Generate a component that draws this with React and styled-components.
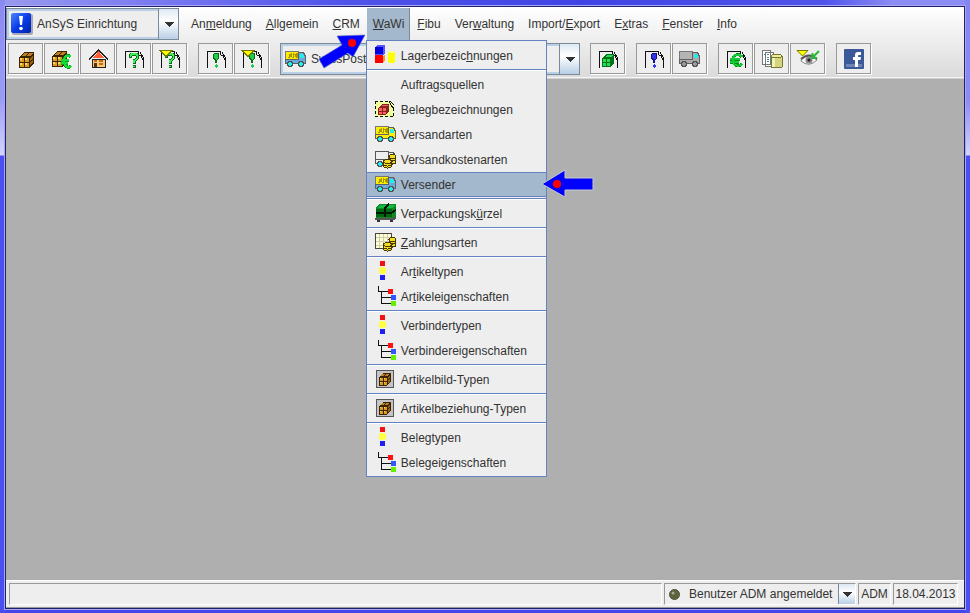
import { useState } from "react";
import styled, { createGlobalStyle } from "styled-components";

const menuItems = [
  { label: "Anmeldung", key: 2 },
  { label: "Allgemein", key: 0 },
  { label: "CRM", key: 0 },
  { label: "WaWi", key: 0, tight: true },
  { label: "Fibu", key: 0 },
  { label: "Verwaltung", key: 3 },
  { label: "Import/Export", key: 7 },
  { label: "Extras", key: 1 },
  { label: "Fenster", key: 0 },
  { label: "Info", key: 0 },
];

const wawiGroups = [
  [{ label: "Lagerbezeichnungen", key: 11, icon: <StorageIcon /> }],
  [
    { label: "Auftragsquellen" },
    { label: "Belegbezeichnungen", icon: <DocBoxIcon /> },
    { label: "Versandarten", icon: <TruckIcon body="#ffee00" /> },
    { label: "Versandkostenarten", icon: <TruckCoinsIcon /> },
    { label: "Versender", icon: <TruckIcon /> },
  ],
  [{ label: "Verpackungskürzel", key: 12, icon: <PackageIcon /> }],
  [{ label: "Zahlungsarten", key: 0, icon: <PaymentIcon /> }],
  [
    { label: "Artikeltypen", key: 2, icon: <TypesIcon /> },
    { label: "Artikeleigenschaften", key: 2, icon: <TreeIcon /> },
  ],
  [
    { label: "Verbindertypen", icon: <TypesIcon /> },
    { label: "Verbindereigenschaften", icon: <TreeIcon /> },
  ],
  [{ label: "Artikelbild-Typen", icon: <FramedCrateIcon /> }],
  [{ label: "Artikelbeziehung-Typen", icon: <FramedCrateIcon /> }],
  [
    { label: "Belegtypen", icon: <TypesIcon /> },
    { label: "Belegeigenschaften", icon: <TreeIcon /> },
  ],
];

const toolsLeft = [
  [
    { name: "Artikel", icon: <CrateIcon /> },
    { name: "Preise", icon: <CrateEuroIcon /> },
    { name: "Adressen", icon: <HouseIcon /> },
    { name: "Anfrage", icon: <DocIcon mark="?" /> },
    { name: "Anfragen filtern", icon: <DocIcon mark="?" filter /> },
  ],
  [
    { name: "Auftrag", icon: <DocIcon mark="!" /> },
    { name: "Aufträge filtern", icon: <DocIcon mark="!" filter /> },
  ],
];

const toolsRight = [
  [{ name: "Lieferschein", icon: <DocIcon mark="box" /> }],
  [
    { name: "Bestellung", icon: <DocIcon mark="!" color="#3333ee" edge="#111188" /> },
    { name: "Versand", icon: <TruckIcon body="#aaaaaa" label="#b4b4b4" wheel="#999999" plain /> },
  ],
  [
    { name: "Rechnung", icon: <DocIcon mark="euro" /> },
    { name: "Archiv", icon: <ArchiveIcon /> },
    { name: "Vorschau", icon: <EyeIcon /> },
  ],
  [{ name: "Facebook", icon: <FacebookIcon /> }],
];

function Mnemonic({ label, index }) {
  if (index === undefined) return label;
  return (
    <span>
      {label.slice(0, index)}
      <u>{label[index]}</u>
      {label.slice(index + 1)}
    </span>
  );
}

function Svg({ w = 20, h = 20, children, ...rest }) {
  return (
    <svg width={w} height={h} viewBox={`0 0 ${w} ${h}`} shapeRendering="crispEdges" aria-hidden="true" {...rest}>
      {children}
    </svg>
  );
}

function Crate() {
  return (
    <g>
      <path d="M0 5L5 0H15V11L10 16H0Z" fill="#3a2400" />
      <path d="M2 4L5 1H9L6 4ZM7 4L10 1H14L11 4Z" fill="#c08020" />
      <path d="M11 6L14 3V6L11 9ZM11 10L14 7V10L11 14Z" fill="#996010" />
      <path d="M1 6h4v4H1zM6 6h4v4H6zM1 11h4v4H1zM6 11h4v4H6z" fill="#dd9a20" />
      <path d="M1 6h2v2H1zM6 6h2v2H6zM1 11h2v2H1zM6 11h2v2H6z" fill="#ffd868" />
    </g>
  );
}

function CrateIcon() {
  return <Svg><g transform="translate(3 3)"><Crate /></g></Svg>;
}

function CrateEuroIcon() {
  return (
    <Svg w={22}>
      <g transform="translate(1 2)"><Crate /></g>
      <path d="M20 8C17 5 13 7 13 12S17 20 20 17M10 11H18M10 14H17" stroke="#0a9a20" strokeWidth="3" fill="none" />
      <path d="M20 8C17 5 13 7 13 12S17 20 20 17M10 11H18M10 14H17" stroke="#11dd33" strokeWidth="2" fill="none" />
    </Svg>
  );
}

function FramedCrateIcon() {
  return (
    <Svg>
      <rect x="1" y="1" width="18" height="18" fill="#c4c4c4" />
      <rect x="1.5" y="1.5" width="17" height="17" fill="none" stroke="#555" />
      <g transform="translate(4 4) scale(.8)"><Crate /></g>
    </Svg>
  );
}

function HouseIcon() {
  return (
    <Svg>
      <path d="M4 10H17V18H4Z" fill="#ffc878" stroke="#222" />
      <path d="M5 9L10.500 2L16 9Z" fill="#ff6038" />
      <path d="M1 10.500L10.500 1L20 10.500" fill="none" stroke="#222" />
      <path d="M6 11h3v2H6zM11 11h4v2h-4zM11 14h4v2h-4z" fill="#b87018" />
      <path d="M6 14h3v4H6z" fill="#553311" />
    </Svg>
  );
}

function DocIcon({ mark, color = "#22cc44", edge = "#0a6a1c", filter }) {
  return (
    <Svg w={22}>
      <path d="M2.500 19V2.500H15M15.500 2V5.500L18 7L20.500 12M17 3L20.500 9V19" fill="none" stroke="#111" />
      {mark === "?" && (
        <g fill="none">
          <path d="M7.500 9V6.500L9 5H13L14.500 6.500V9L11 12V15M11 16V19" stroke={edge} strokeWidth="3" />
          <path d="M7.500 8V6.500L9 5H13L14.500 6.500V9L11 12V14M11 17V18" stroke="#44ee55" strokeWidth="1.500" />
        </g>
      )}
      {mark === "!" && (
        <g>
          <path d="M9 4H13L14 5V10L12 11V14H10V11L8 10V5Z" fill={edge} />
          <path d="M11 15L13 17L11 19L9 17Z" fill={color} />
          <path d="M9 5H13V9L11 11L9 9Z" fill={color} />
        </g>
      )}
      {mark === "box" && (
        <g>
          <path d="M5 9L9 5H17V14L13 18H5Z" fill="#087018" />
          <path d="M6 10h3v3H6zM10 10h3v3h-3zM6 14h3v3H6zM10 14h3v3h-3zM8 8l2-2h6l-2 2z" fill="#22dd55" />
        </g>
      )}
      {mark === "euro" && (
        <g fill="none">
          <path d="M17 8C14 4 8 5 8 11S14 18 17 15M5 10H15M5 13H14" stroke="#0a8a1c" strokeWidth="3" />
          <path d="M17 8C14 4 8 5 8 11S14 18 17 15M5 10H15M5 13H14" stroke="#11cc33" strokeWidth="2" />
        </g>
      )}
      {filter && <path d="M1 1.500H13L7 7.500Z" fill="#ffff00" stroke="#777700" />}
    </Svg>
  );
}

function Wheel({ x, y, fill }) {
  return (
    <g>
      <path d={`M${x - 2} ${y - 3}h4v1h1v4h-1v1h-4v-1h-1v-4h1z`} fill="#505050" />
      <path d={`M${x - 1} ${y - 2}h2v1h1v2h-1v1h-2v-1h-1v-2h1z`} fill={fill} />
    </g>
  );
}

function TruckIcon({ body = "#6aaae0", label = "#ffee00", wheel = "#22eeee", plain }) {
  return (
    <Svg w={22}>
      <path d="M.5 2.500H13.500V10.500H.5Z" fill={label} stroke="#777" />
      <path d="M13.500 3.500H18.500L20.500 7.500V14.500H.5V10.500H13.500Z" fill={body} stroke="#606060" />
      <path d="M15 5h3v1h1v3h-4z" fill="#22eeee" />
      {!plain && <path d="M3 8h1V5h1v2h1V4M7 8h1V4M9 5h1v2h1V4M11 8h1V4" fill="none" stroke="#a89800" />}
      <Wheel x={5} y={15} fill={wheel} />
      <Wheel x={16} y={15} fill={wheel} />
    </Svg>
  );
}

function Coins() {
  return (
    <g fill="#f4dc20" stroke="#443800" strokeWidth="1">
      <ellipse cx="17.500" cy="13" rx="3.500" ry="2" />
      <ellipse cx="17.500" cy="10" rx="3.500" ry="2" />
      <ellipse cx="17.500" cy="7.500" rx="3.500" ry="2" />
      <ellipse cx="12.500" cy="17" rx="4" ry="2" />
      <ellipse cx="12.500" cy="15" rx="4" ry="2" />
      <ellipse cx="12.500" cy="12.500" rx="4" ry="2" />
    </g>
  );
}

function TruckCoinsIcon() {
  return (
    <Svg w={22}>
      <path d="M.5 2.500H13.500V10.500H.5ZM13.500 3.500H18.500L20.500 7.500V14.500H.5V10" fill="#eeeeee" stroke="#555" />
      <path d="M15 5h3v4h-3z" fill="#22eeee" />
      <Wheel x={5} y={15} fill="#22eeee" />
      <Coins />
    </Svg>
  );
}

function PaymentIcon() {
  return (
    <Svg w={22}>
      <path d="M.5 1.500H16.500V16.500H.5Z" fill="#ffffcc" stroke="#444" />
      <path d="M1 5.500H16M1 9.500H16M1 13.500H16M4.500 2V16M8.500 2V16M12.500 2V16" stroke="#ccccbb" fill="none" />
      <path d="M0 1.500H17" stroke="#444" />
      <Coins />
    </Svg>
  );
}

function PackageIcon() {
  return (
    <Svg w={22}>
      <path d="M1 5L4 1H21V12L18 15H1Z" fill="#118822" />
      <path d="M1 6H17V14H1Z" fill="#006611" />
      <path d="M3 5L5 2H20L17 5H3Z" fill="#11bb44" />
      <path d="M9.500 14V5L14 1M1 9.500H17L21 7" fill="none" stroke="#001800" strokeWidth="2" />
      <path d="M0 15H18L21 12V15L19 17H0Z" fill="#555" />
      <path d="M2 17h3v2H2zM15 17h3v2h-3z" fill="#333" />
    </Svg>
  );
}

function StorageIcon() {
  return (
    <Svg w={22}>
      <path d="M0 2L2 0H10V8L8 10H0Z" fill="#5555ff" />
      <path d="M0 2H8V9H0Z" fill="#0000dd" />
      <path d="M8 11L10 9V15L8 17Z" fill="#ff9911" />
      <path d="M0 10H8V18H0Z" fill="#ff0000" />
      <path d="M13 7Q17 4 20 7V17Q17 19 13 17Z" fill="#ffff00" />
      <ellipse cx="16.500" cy="7" rx="3" ry="1.500" fill="#ffff88" />
    </Svg>
  );
}

function DocBoxIcon() {
  return (
    <Svg w={22}>
      <path d="M0 2H14L19 7V18H0Z" fill="#eeff99" />
      <path d="M.5 2V18M0 2.500H14M0 17.500H19M18.500 17V9" stroke="#111" strokeDasharray="3 2" fill="none" />
      <path d="M14 2L16 6L19 10M15 2L19 6" stroke="#111" fill="none" />
      <path d="M3 9L7 5H14V12L11 16H3Z" fill="#882222" />
      <path d="M4 9h3v3H4zM8 9h3v3H8zM4 13h3v2H4zM8 13h3v2H8zM6 7l1-1h6l-1 1z" fill="#ff6060" />
    </Svg>
  );
}

function TypesIcon() {
  return (
    <Svg>
      <rect x="5" y="0" width="5" height="5" fill="#ee1111" />
      <path d="M5 6H10L11 8V11L10 13H5L4 11V8Z" fill="#ffff44" />
      <rect x="5" y="14" width="5" height="5" fill="#2222ee" />
    </Svg>
  );
}

function TreeIcon() {
  return (
    <Svg w={22}>
      <path d="M3.500 0V5.500H13M6.500 5V17.500H16M6 11.500H16" stroke="#111" fill="none" />
      <rect x="13" y="3" width="5" height="5" fill="#ff1111" />
      <rect x="16" y="9" width="5" height="5" fill="#3355ff" />
      <rect x="16" y="15" width="5" height="5" fill="#66ee00" />
    </Svg>
  );
}

function ArchiveIcon() {
  return (
    <Svg w={22}>
      <path d="M1.500 1.500H9.500V15.500H1.500ZM4.500 3.500H12.500V17.500H4.500Z" fill="#fff" stroke="#777" />
      <path d="M3 5.500H8M6 8.500H11M6 10.500H11M6 12.500H11" stroke="#448899" strokeDasharray="2 1" />
      <path d="M10 7Q15 4 21 7V18Q15 20 10 18Z" fill="#d4d47c" stroke="#777733" />
      <path d="M11 8H14V18H11Z" fill="#f2f2b4" />
      <ellipse cx="15.500" cy="7" rx="5.500" ry="1.500" fill="#eeee99" stroke="#777733" />
    </Svg>
  );
}

function EyeIcon() {
  return (
    <Svg w={24} shapeRendering="auto">
      <path d="M5 11Q13 3 21 11Q13 19 5 12Z" fill="#f4f4f4" stroke="#888" />
      <path d="M5 10Q13 3 21 10" fill="none" stroke="#555" strokeWidth="2" />
      <circle cx="13" cy="11" r="3.500" fill="#888" />
      <circle cx="13" cy="11" r="1.500" fill="#222" />
      <path d="M1 1.500H12L6.500 7Z" fill="#ffff00" stroke="#777700" />
      <path d="M23 2L17 8M16.500 4V9H21" fill="none" stroke="#22bb33" strokeWidth="2" />
    </Svg>
  );
}

function FacebookIcon() {
  return (
    <Svg shapeRendering="auto">
      <rect width="20" height="20" rx="1" fill="#3b5998" />
      <rect x="2" y="15" width="16" height="3" fill="#6d84b4" />
      <path d="M11 18V11H9V8H11V6Q11 3 14 3H17V6H15Q14 6 14 7V8H17L16.500 11H14V18Z" fill="#fff" />
    </Svg>
  );
}

function AppIcon() {
  return (
    <Svg w={22} h={22} shapeRendering="auto">
      <defs>
        <linearGradient id="appBlue" x1="0" y1="0" x2="1" y2="1">
          <stop offset="0" stopColor="#4a86ff" />
          <stop offset=".5" stopColor="#0a3ce8" />
          <stop offset="1" stopColor="#0022aa" />
        </linearGradient>
      </defs>
      <rect x="1" y="1" width="21" height="21" rx="2" fill="#a8a8b4" />
      <rect width="20" height="20" rx="2" fill="url(#appBlue)" />
      <path d="M8 3H12L11 12H9Z" fill="#fff" />
      <circle cx="10" cy="15.500" r="1.800" fill="#fff" />
    </Svg>
  );
}

function Combo({ label, icon, value, size }) {
  return (
    <ComboBox $size={size}>
      <ComboIcon>{icon}</ComboIcon>
      <ComboSelect aria-label={label} defaultValue={value}>
        <option>{value}</option>
      </ComboSelect>
      <ComboArrow>
        <Svg w={10} h={5}><path d="M0 0H10L5 5Z" fill="#333" /></Svg>
      </ComboArrow>
    </ComboBox>
  );
}

function ToolGroups({ groups }) {
  return groups.map((group) => (
    <ToolGroup key={group[0].name}>
      {group.map((tool) => (
        <ToolButton key={tool.name} aria-label={tool.name}>{tool.icon}</ToolButton>
      ))}
    </ToolGroup>
  ));
}

function App() {
  const [openMenu, setOpenMenu] = useState("WaWi");
  const [selected, setSelected] = useState("Versender");

  return (
    <Frame>
      <GlobalStyle />
      <Window>
        <Header>
          <MenuRow>
            <Combo size="module" label="Modul" icon={<AppIcon />} value="AnSyS Einrichtung" />
            <MenuBar>
              {menuItems.map((item) => (
                <MenuSlot key={item.label}>
                  <MenuButton
                    $active={openMenu === item.label}
                    $tight={item.tight}
                    onClick={() => setOpenMenu(openMenu === item.label ? "" : item.label)}
                  >
                    <Mnemonic label={item.label} index={item.key} />
                  </MenuButton>
                  {item.label === "WaWi" && openMenu === "WaWi" && (
                    <>
                      <Dropdown>
                        {wawiGroups.map((group) => (
                          <DropdownGroup key={group[0].label}>
                            {group.map((entry) => (
                              <Entry
                                key={entry.label}
                                role="menuitem"
                                $active={selected === entry.label}
                                onClick={() => setSelected(entry.label)}
                              >
                                <EntryIcon>{entry.icon}</EntryIcon>
                                <Mnemonic label={entry.label} index={entry.key} />
                              </Entry>
                            ))}
                          </DropdownGroup>
                        ))}
                      </Dropdown>
                      <MenuPointer width="52" height="38" viewBox="0 0 52 38" aria-hidden="true">
                        <path d="M50 4L22 5L27 14L4 28L9 37L33 22L38 26Z" fill="#0000ff" stroke="#6677bb" strokeWidth=".6" />
                        <circle cx="37" cy="12" r="4" fill="#ff0000" />
                      </MenuPointer>
                      <EntryPointer width="54" height="30" viewBox="0 0 54 30" aria-hidden="true">
                        <path d="M1 15L24 1V9H52V21H24V28Z" fill="#0000ff" stroke="#c8c8d0" />
                        <circle cx="16" cy="15" r="4" fill="#ff0000" />
                      </EntryPointer>
                    </>
                  )}
                </MenuSlot>
              ))}
            </MenuBar>
          </MenuRow>
          <Toolbar>
            <ToolGroups groups={toolsLeft} />
            <Combo size="carrier" label="Versender" icon={<TruckIcon />} value="SwissPost" />
            <ToolGroups groups={toolsRight} />
          </Toolbar>
        </Header>
        <Desktop />
        <StatusBar>
          <StatusCell />
          <StatusCell>
            <Combo
              size="status"
              label="Benutzer"
              icon={
                <Svg w={11} h={11} shapeRendering="auto">
                  <circle cx="5.500" cy="5.500" r="5" fill="#5c6440" stroke="#4c5438" />
                  <circle cx="4" cy="4" r="1.500" fill="#a8ac90" />
                </Svg>
              }
              value="Benutzer ADM angemeldet"
            />
          </StatusCell>
          <StatusCell>ADM</StatusCell>
          <StatusCell>18.04.2013</StatusCell>
        </StatusBar>
      </Window>
    </Frame>
  );
}

const GlobalStyle = createGlobalStyle`
  * {
    box-sizing: border-box;
  }
  body {
    margin: 0;
  }
  body, button, select {
    font-family: "Liberation Sans", Arial, sans-serif;
    font-size: 12px;
    color: #333;
  }
  button {
    cursor: pointer;
  }
  svg {
    display: block;
    flex: none;
  }
`;

const Frame = styled.div`
  display: flex;
  min-height: 100vh;
  padding: 5px 4px 3px;
  background:
    linear-gradient(#8a8af0, #9c9cf6 100px, #d4d4fc 155px, #4c4ff0 156px) left / 5px 100% no-repeat,
    linear-gradient(#8484f2, #8c8cf4 100px, #d4d4fc 155px, #4c4ff0 156px) right / 5px 100% no-repeat,
    linear-gradient(90deg, #9a9aee, #7c7cf0 15%, #5054ea 35%, #4044e4 60%, #5054ea 85%, #8c8cf4 92%) top / 100% 6px no-repeat,
    #4448ea;
`;

const Window = styled.div`
  flex: 1;
  min-width: 0;
  display: flex;
  flex-direction: column;
  border: 1px solid #20206c;
  outline: 1px solid #a8a8f4;
  margin: 1px;
`;

const Header = styled.header`
  padding-top: 1px;
  background: linear-gradient(#ffffff, #dadada);
  border-bottom: 1px solid #d0d0d0;
  box-shadow: inset 0 -1px #f6f6f6;
`;

const MenuRow = styled.div`
  display: flex;
  height: 32px;
`;

const MenuBar = styled.nav`
  display: flex;
  padding-left: 5px;
`;

const MenuSlot = styled.div`
  position: relative;
  display: flex;
`;

const MenuButton = styled.button`
  padding: 0 ${({ $tight }) => ($tight ? 6 : 7)}px;
  border: 0;
  background: ${({ $active }) => ($active ? "#a3b8cc" : "none")};
  box-shadow: ${({ $active }) => ($active ? "inset -1px 0 #7a8a99" : "none")};
`;

const Dropdown = styled.div.attrs({ role: "menu" })`
  position: absolute;
  z-index: 2;
  top: 100%;
  left: -1px;
  width: 181px;
  padding: 2px 0 1px;
  background: #eee;
  border: 1px solid #6382bf;
`;

const DropdownGroup = styled.div`
  & + & {
    margin-top: 1px;
    padding-top: 2px;
    border-top: 1px solid #6382bf;
    box-shadow: inset 0 1px #fff;
  }
`;

const Entry = styled.button`
  display: flex;
  align-items: center;
  gap: 4px;
  width: 100%;
  height: 25px;
  padding: 0 8px;
  border: solid ${({ $active }) => ($active ? "#6382bf" : "transparent")};
  border-width: 1px 0;
  background: ${({ $active }) => ($active ? "#a3b8cc" : "none")};
  white-space: nowrap;
`;

const EntryIcon = styled.span`
  width: 22px;
  height: 21px;
`;

const MenuPointer = styled.svg`
  position: absolute;
  z-index: 3;
  top: 23px;
  right: 100%;
`;

const EntryPointer = styled.svg`
  position: absolute;
  z-index: 3;
  top: 161px;
  left: 174px;
`;

const Toolbar = styled.div`
  display: flex;
  gap: 10px;
  padding: 3px 2px;
`;

const ToolGroup = styled.div`
  display: flex;
  gap: 1px;
  padding-right: 1px;
`;

const ToolButton = styled.button`
  display: flex;
  align-items: center;
  justify-content: center;
  width: 35px;
  height: 31px;
  padding: 0;
  background: #eee;
  border: 1px solid #999;
  box-shadow: 1px 1px #fff;
`;

const comboSizes = {
  module: { width: 173, height: 32, icon: 30, arrow: 20 },
  carrier: { width: 300, height: 32, icon: 30, arrow: 20 },
  status: { width: 190, height: 20, icon: 24, arrow: 17 },
};

const ComboBox = styled.div`
  display: grid;
  grid-template-columns: ${({ $size }) => `${comboSizes[$size].icon}px 1fr ${comboSizes[$size].arrow}px`};
  width: ${({ $size }) => comboSizes[$size].width}px;
  height: ${({ $size }) => comboSizes[$size].height}px;
  background: #eee;
  ${({ $size }) =>
    $size !== "status" &&
    `
    border: 1px solid #7a8a99;
    box-shadow: inset 0 0 0 2px #b8cfe5;
  `}
`;

const ComboIcon = styled.span`
  grid-area: 1 / 1;
  display: flex;
  align-items: center;
  padding-left: 4px;
`;

const ComboSelect = styled.select`
  grid-area: 1 / 2 / 2 / 4;
  appearance: none;
  padding: 0;
  border: 0;
  background: none;
`;

const ComboArrow = styled.span`
  grid-area: 1 / 3;
  display: flex;
  align-items: center;
  justify-content: center;
  pointer-events: none;
  border-left: 1px solid #7a8a99;
  background: linear-gradient(#dde8f3, #ffffff 40%, #b8cfe5);
`;

const Desktop = styled.main`
  flex: 1;
  background: #afafaf;
`;

const StatusBar = styled.footer`
  display: grid;
  grid-template-columns: 1fr auto 33px 65px;
  gap: 2px;
  height: 28px;
  padding: 2px 6px 2px 3px;
  background: #eee;
  border-top: 1px solid #fff;
  border-bottom: 1px solid #999;
`;

const StatusCell = styled.div`
  display: flex;
  align-items: center;
  justify-content: center;
  height: 22px;
  border: 1px solid;
  border-color: #999 #fff #fff #999;
`;

export default App;
